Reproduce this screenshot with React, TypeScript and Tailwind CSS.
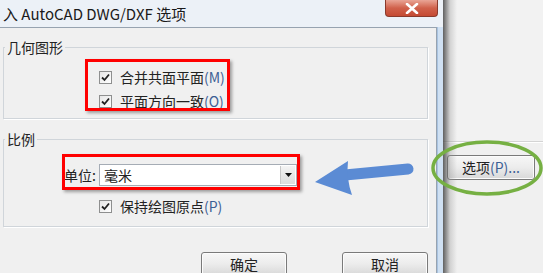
import React from "react";

const font = { fontFamily: '"Noto Sans CJK SC", "Noto Sans", sans-serif' };

function Check() {
  return (
    <span className="inline-flex w-[13px] h-[13px] border border-[#8e8f8f] bg-gradient-to-br from-[#e6e6e6] to-[#ffffff] items-center justify-center shrink-0">
      <svg width="9" height="9" viewBox="0 0 9 9">
        <path d="M1 4.5 L3.5 7 L8 1.5" fill="none" stroke="#222" strokeWidth="1.8" />
      </svg>
    </span>
  );
}

function CheckRow({ label, key2 }: { label: string; key2: string }) {
  return (
    <div className="flex items-center gap-[8px] h-[20px] text-[14px] leading-[20px] text-[#222]">
      <Check />
      <span>
        {label}
        <span className="text-[#3d5f95]">{key2}</span>
      </span>
    </div>
  );
}

function WinButton({ children, className }: { children: React.ReactNode; className?: string }) {
  return (
    <div
      className={
        "flex items-center justify-center border border-[#7a7a7a] rounded-[3px] bg-gradient-to-b from-[#f7f7f7] via-[#ececec] to-[#d8d8d8] shadow-[inset_0_0_0_1px_#fcfcfc] text-[14px] text-[#222] " +
        (className || "")
      }
    >
      {children}
    </div>
  );
}

export default function App() {
  return (
    <div className="relative w-[543px] h-[273px] overflow-hidden bg-[#f0f0f0] flex" style={font}>
      {/* Dialog */}
      <div className="w-[443px] shrink-0 flex flex-col bg-[#cfe0f2]">
        <div className="h-[28px] flex justify-between items-start bg-[#ecf1f7]">
          <span className="pl-[3px] text-[15px] leading-[27px] text-[#1a1a1a]">入 AutoCAD DWG/DXF 选项</span>
          <div className="w-[53px] h-[17px] mr-[5px] rounded-b-[4px] border border-t-0 border-[#8a3a2c] bg-gradient-to-b from-[#e9a596] via-[#d0614b] to-[#c44a33] flex items-center justify-center">
            <svg width="14" height="11" viewBox="0 0 14 11">
              <path d="M2 1 L12 10 M12 1 L2 10" stroke="#fff" strokeWidth="2.6" strokeLinecap="round" />
            </svg>
          </div>
        </div>
        <div className="flex-1 flex">
          <div className="w-[437px] bg-[#f0f0f0] border-t border-r border-[#97a3b0] flex flex-col pt-[9px] pl-[3px] pr-[8px]">
            <fieldset className="border border-[#d0d5da] h-[82px] w-[425px] shadow-[1px_1px_0_#ffffff]">
              <legend className="ml-[1px] px-[2px] text-[14px] leading-[20px] text-[#222]">几何图形</legend>
              <div className="flex flex-col gap-[4px] pl-[95px] pt-[10px]">
                <CheckRow label="合并共面平面" key2="(M)" />
                <CheckRow label="平面方向一致" key2="(O)" />
              </div>
            </fieldset>
            <fieldset className="mt-[10px] border border-[#d0d5da] h-[98px] w-[425px] shadow-[1px_1px_0_#ffffff]">
              <legend className="ml-[1px] px-[2px] text-[14px] leading-[20px] text-[#222]">比例</legend>
              <div className="flex items-center pl-[60px] pt-[15px] h-[37px]">
                <span className="text-[14px] leading-[22px] text-[#222] w-[35px]">单位:</span>
                <div className="w-[198px] h-[22px] border border-[#a5acb5] bg-white flex items-center">
                  <span className="flex-1 pl-[4px] text-[14px] leading-[20px] text-[#222]">毫米</span>
                  <div className="w-[15px] h-[18px] mr-[1px] bg-gradient-to-b from-[#f4f4f4] to-[#dcdcdc] border-l border-[#c8c8c8] flex items-center justify-center">
                    <svg width="7" height="4" viewBox="0 0 7 4">
                      <path d="M0 0 L7 0 L3.5 4 Z" fill="#111" />
                    </svg>
                  </div>
                </div>
              </div>
              <div className="pl-[95px] pt-[10px]">
                <CheckRow label="保持绘图原点" key2="(P)" />
              </div>
            </fieldset>
            <div className="mt-[25px] flex justify-end gap-[55px]">
              <WinButton className="w-[86px] h-[24px]">确定</WinButton>
              <WinButton className="w-[86px] h-[24px]">取消</WinButton>
            </div>
          </div>
          <div className="flex-1 border-l border-[#a9c3e0]" />
        </div>
      </div>

      {/* Background window on the right */}
      <div className="relative flex-1 flex flex-col">
        <div className="h-[142px] border-b border-[#d4d4d4] bg-[#f2f2f2]" />
        <div className="border-t border-white pl-[4px] pt-[12px]">
          <WinButton className="w-[88px] h-[25px]">
            选项<span className="text-[#3d5f95]">(P)...</span>
          </WinButton>
        </div>
        <div className="absolute left-0 top-0 bottom-0 w-[14px] bg-gradient-to-r from-[rgba(70,70,70,0.85)] via-[rgba(150,150,150,0.35)] to-transparent pointer-events-none" />
      </div>

      {/* Annotations */}
      <div className="absolute left-[85px] top-[59px] w-[145px] h-[52px] border-[3px] border-[#ff0000] shadow-[2px_2px_3px_rgba(0,0,0,0.35)]" />
      <div className="absolute left-[62px] top-[154px] w-[238px] h-[36px] border-[3px] border-[#ff0000] shadow-[2px_2px_3px_rgba(0,0,0,0.35)]" />
      <svg className="absolute left-[300px] top-[150px]" width="120" height="52" viewBox="0 0 120 52">
        <line x1="45" y1="25" x2="108" y2="19" stroke="#5b8bd4" strokeWidth="11" strokeLinecap="round" />
        <path d="M15 32 L48 11 Q46 28 52 45 Z" fill="#5b8bd4" />
      </svg>
      <svg className="absolute left-[430px] top-[139px]" width="113" height="60" viewBox="0 0 113 60">
        <ellipse cx="57" cy="29" rx="54" ry="26" fill="none" stroke="#76b043" strokeWidth="3.5" />
      </svg>
    </div>
  );
}
